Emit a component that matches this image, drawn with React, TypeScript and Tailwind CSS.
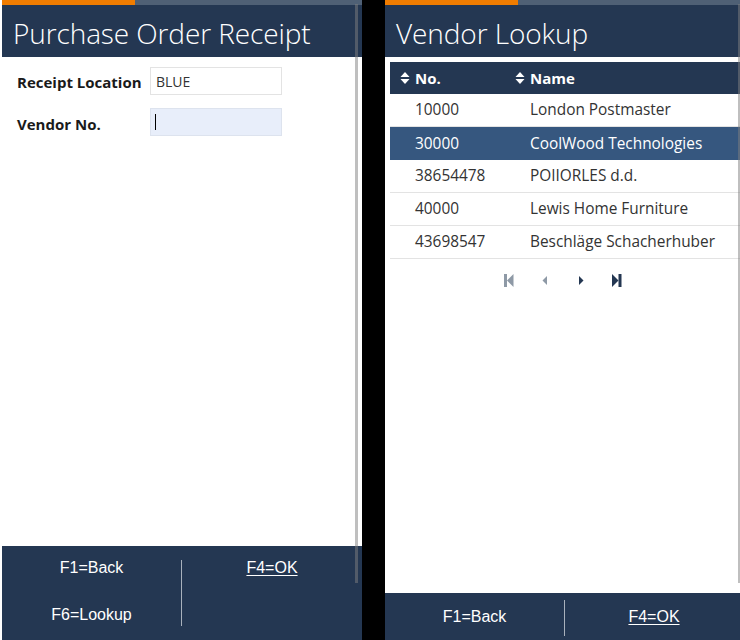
const navy = "bg-[#243752]";

function SortIcon() {
  return (
    <svg width="10" height="14" viewBox="0 0 10 14" className="shrink-0">
      <path d="M5 1 L9.5 6 H0.5 Z" fill="white" />
      <path d="M5 13 L9.5 8 H0.5 Z" fill="white" />
    </svg>
  );
}

function Pager() {
  const off = "#8e99a6";
  const on = "#243752";
  return (
    <div className="flex items-center justify-center gap-[24px] pt-[14px] pr-[4px]">
      <svg width="12" height="15" viewBox="0 0 12 15">
        <rect x="1" y="1" width="3" height="13" fill={off} />
        <path d="M4 7.5 L10.5 1 V14 Z" fill={off} />
      </svg>
      <svg width="12" height="15" viewBox="0 0 12 15">
        <path d="M3.5 7.5 L8 3 V12 Z" fill={off} />
      </svg>
      <svg width="12" height="15" viewBox="0 0 12 15">
        <path d="M8.5 7.5 L4 3 V12 Z" fill={on} />
      </svg>
      <svg width="12" height="15" viewBox="0 0 12 15">
        <path d="M7.5 7.5 L1 1 V14 Z" fill={on} />
        <rect x="7.5" y="1" width="3" height="13" fill={on} />
      </svg>
    </div>
  );
}

function TopBar() {
  return (
    <div className="flex h-[5px] shrink-0 bg-[#4f6075]">
      <div className="w-[133px] bg-[#f07c00]" />
    </div>
  );
}

function Title({ text }: { text: string }) {
  return (
    <div className={`${navy} flex h-[52px] shrink-0 items-center px-[11px] pt-[4px]`}>
      <h1 className="text-[28px] leading-none font-light tracking-[-0.1px] text-white">{text}</h1>
    </div>
  );
}

function Key({ label, underline = false }: { label: string; underline?: boolean }) {
  return (
    <span
      className={`text-[16px] text-white ${underline ? "underline underline-offset-2" : ""}`}
      style={{ fontFamily: '"Liberation Sans", Arial, sans-serif' }}
    >
      {label}
    </span>
  );
}

const rows = [
  { no: "10000", name: "London Postmaster" },
  { no: "30000", name: "CoolWood Technologies", selected: true },
  { no: "38654478", name: "POIIORLES d.d." },
  { no: "40000", name: "Lewis Home Furniture" },
  { no: "43698547", name: "Beschläge Schacherhuber" },
];

function ReceiptPanel() {
  return (
    <div className="relative flex h-[640px] w-[360px] flex-col bg-white">
      <TopBar />
      <Title text="Purchase Order Receipt" />
      <div className="flex-1 pt-[10px] pl-[15px] text-[#1a1a1a]">
        <div className="flex items-center">
          <span className="w-[133px] pt-[2px] text-[15px] font-bold">Receipt Location</span>
          <div className="flex h-[28px] w-[132px] items-center border border-[#e3e3e3] bg-white px-[5px] text-[14px] text-[#333]">
            BLUE
          </div>
        </div>
        <div className="mt-[13px] flex items-center">
          <span className="w-[133px] pt-[5px] text-[15px] font-bold">Vendor No.</span>
          <div className="flex h-[28px] w-[132px] items-center border border-[#dde3ee] bg-[#e8eefa] px-[4px]">
            <span className="h-[16px] w-px bg-black" />
          </div>
        </div>
      </div>
      <div className={`${navy} grid h-[94px] shrink-0 grid-cols-[179px_1px_1fr]`}>
        <div className="flex flex-col">
          <div className="flex h-[44px] items-center justify-center">
            <Key label="F1=Back" />
          </div>
          <div className="flex h-[50px] items-center justify-center">
            <Key label="F6=Lookup" />
          </div>
        </div>
        <div className="my-[14px] bg-[#a9b1bc]" />
        <div className="flex h-[44px] items-center justify-center">
          <Key label="F4=OK" underline />
        </div>
      </div>
      <div className="absolute top-[4px] right-[4px] h-[579px] w-[3px] bg-[#808080]/50" />
    </div>
  );
}

function LookupPanel() {
  return (
    <div className="relative flex h-[640px] w-[355px] flex-col bg-white">
      <TopBar />
      <Title text="Vendor Lookup" />
      <div className="flex-1 pt-[5px] pl-[5px]">
        <div className={`${navy} flex h-[32px] items-center text-[15px] font-bold text-white`}>
          <div className="flex w-[125px] items-center gap-[5px] pl-[10px]">
            <SortIcon />
            <span>No.</span>
          </div>
          <div className="flex items-center gap-[5px]">
            <SortIcon />
            <span>Name</span>
          </div>
        </div>
        {rows.map((r) => (
          <div
            key={r.no}
            className={`flex h-[33px] items-center text-[15.4px] ${
              r.selected ? "bg-[#36577f] text-white" : "border-b border-[#e3e3e3] text-[#333]"
            }`}
          >
            <span className="w-[140px] pl-[25px]">{r.no}</span>
            <span className="whitespace-nowrap">{r.name}</span>
          </div>
        ))}
        <Pager />
      </div>
      <div className={`${navy} grid h-[47px] shrink-0 grid-cols-[179px_1px_1fr]`}>
        <div className="flex items-center justify-center">
          <Key label="F1=Back" />
        </div>
        <div className="mt-[7px] mb-[4px] bg-[#a9b1bc]" />
        <div className="flex items-center justify-center pl-[3px]">
          <Key label="F4=OK" underline />
        </div>
      </div>
      <div className="absolute top-[4px] right-0 h-[579px] w-[2px] bg-[#808080]/50" />
    </div>
  );
}

export default function App() {
  return (
    <div
      className="flex h-[640px] w-[740px] overflow-hidden bg-black"
      style={{ fontFamily: '"Open Sans", sans-serif' }}
    >
      <div className="w-[2px] bg-white" />
      <ReceiptPanel />
      <div className="w-[23px]" />
      <LookupPanel />
    </div>
  );
}
